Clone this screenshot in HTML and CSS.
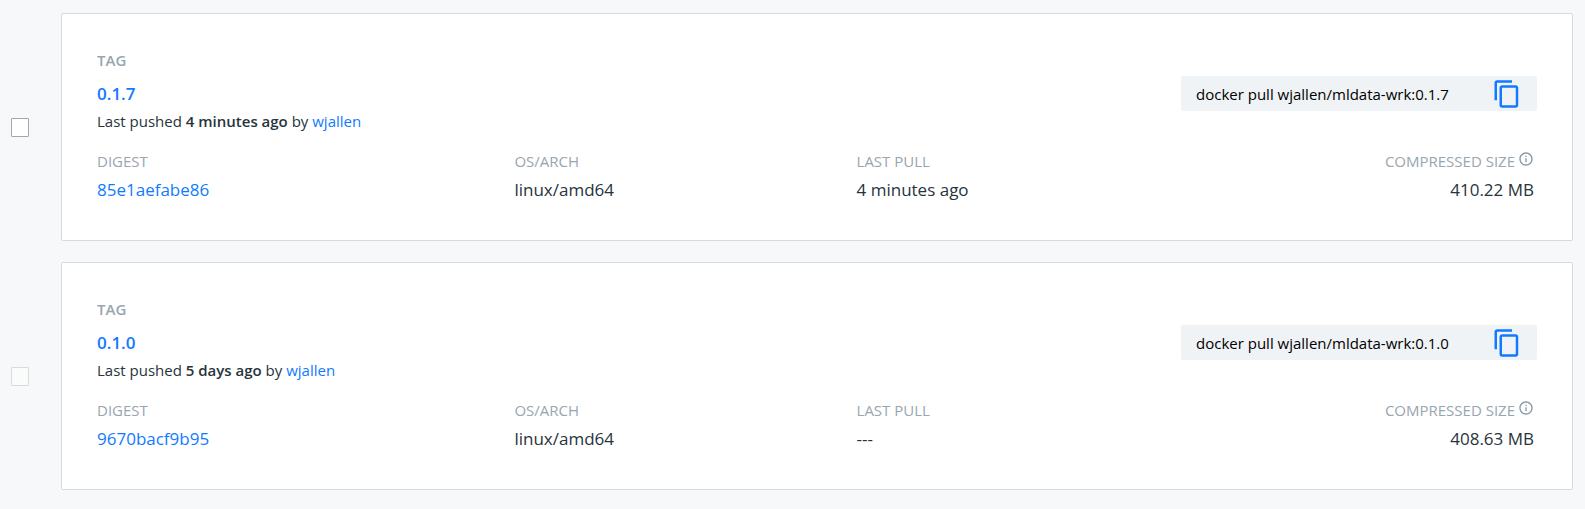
FILE: index.html
```
<!DOCTYPE html>
<html lang="en">
<head>
<meta charset="utf-8">
<title>Tags</title>
<link rel="stylesheet" href="styles.css">
</head>
<body>
<svg class="sprite" aria-hidden="true">
  <symbol id="copy" viewBox="0 0 24 24"><path d="M16 1H4c-1.100 0-2 .9-2 2v14h2V3h12V1zm3 4H8c-1.100 0-2 .9-2 2v14c0 1.100.9 2 2 2h11c1.100 0 2-.9 2-2V7c0-1.100-.9-2-2-2zm0 16H8V7h11v14z"/></symbol>
  <symbol id="info" viewBox="0 0 24 24"><path d="M11 7h2v2h-2zm0 4h2v6h-2zm1-9C6.480 2 2 6.480 2 12s4.480 10 10 10 10-4.480 10-10S17.520 2 12 2zm0 18c-4.410 0-8-3.590-8-8s3.590-8 8-8 8 3.590 8 8-3.590 8-8 8z"/></symbol>
</svg>
<main class="tags">
  <div class="row">
    <input class="check" type="checkbox" aria-label="Select tag 0.1.7">
    <article class="card">
      <div class="head">
        <div class="summary">
          <div class="label strong">TAG</div>
          <a class="name" href="#">0.1.7</a>
          <div class="pushed">Last pushed <b>4 minutes ago</b> by <a href="#">wjallen</a></div>
        </div>
        <div class="pull">
          <input class="command" type="text" readonly aria-label="Pull command" value="docker pull wjallen/mldata-wrk:0.1.7">
          <button class="copy" type="button" aria-label="Copy"><svg><use href="#copy"/></svg></button>
        </div>
      </div>
      <dl class="details">
        <div><dt class="label">DIGEST</dt><dd><a href="#">85e1aefabe86</a></dd></div>
        <div><dt class="label">OS/ARCH</dt><dd>linux/amd64</dd></div>
        <div><dt class="label">LAST PULL</dt><dd>4 minutes ago</dd></div>
        <div class="size"><dt class="label">COMPRESSED SIZE<svg class="info"><use href="#info"/></svg></dt><dd>410.22 MB</dd></div>
      </dl>
    </article>
  </div>
  <div class="row">
    <input class="check" type="checkbox" aria-label="Select tag 0.1.0" disabled>
    <article class="card">
      <div class="head">
        <div class="summary">
          <div class="label strong">TAG</div>
          <a class="name" href="#">0.1.0</a>
          <div class="pushed">Last pushed <b>5 days ago</b> by <a href="#">wjallen</a></div>
        </div>
        <div class="pull">
          <input class="command" type="text" readonly aria-label="Pull command" value="docker pull wjallen/mldata-wrk:0.1.0">
          <button class="copy" type="button" aria-label="Copy"><svg><use href="#copy"/></svg></button>
        </div>
      </div>
      <dl class="details">
        <div><dt class="label">DIGEST</dt><dd><a href="#">9670bacf9b95</a></dd></div>
        <div><dt class="label">OS/ARCH</dt><dd>linux/amd64</dd></div>
        <div><dt class="label">LAST PULL</dt><dd>---</dd></div>
        <div class="size"><dt class="label">COMPRESSED SIZE<svg class="info"><use href="#info"/></svg></dt><dd>408.63 MB</dd></div>
      </dl>
    </article>
  </div>
</main>
</body>
</html>
```
FILE: styles.css
```
* { box-sizing: border-box; }

body {
  margin: 0;
  background: #f7f8fa;
  color: #27343b;
  font: 15px/22px "Open Sans", sans-serif;
}

a { color: #127aff; text-decoration: none; }
b { font-weight: 600; }
.sprite { display: none; }

.tags {
  display: flex;
  flex-direction: column;
  gap: 21px;
  padding: 13px 12px 20px 11px;
}

.row { display: flex; align-items: center; gap: 32px; }

.check {
  appearance: none;
  flex: none;
  width: 18px;
  height: 19px;
  margin: 0;
  border: 1px solid #9aaab5;
  border-radius: 1px;
  background: #fff;
}
.check:disabled { border-color: #d8dbe0; background: #fafcfb; }

.card {
  flex: 1;
  padding: 35px 35px 38px;
  border: 1px solid #d5dade;
  border-radius: 2px;
  background: #fff;
}

.head { display: flex; justify-content: space-between; align-items: flex-start; }

.label { color: #98a6b0; }
.strong { font-weight: 600; }

.name {
  display: block;
  margin: 11px 0 4px;
  font-size: 17px;
  line-height: 24px;
  font-weight: 600;
}

.pull {
  display: flex;
  align-items: center;
  width: 356px;
  height: 35px;
  margin-top: 27px;
  padding: 0 15px;
  border-radius: 2px;
  background: #f0f3f6;
}

.command {
  flex: 1;
  min-width: 0;
  padding: 0;
  border: 0;
  background: none;
  color: #000;
  font: inherit;
  outline: 0;
}

.copy { display: flex; padding: 0; border: 0; background: none; }
.copy svg { width: 30px; height: 30px; fill: #127aff; }

.details {
  display: grid;
  grid-template-columns: 122fr 100fr 100fr 98fr;
  margin: 18px 0 0;
  padding-right: 3px;
}

dd { margin: 6px 0 0; font-size: 17px; line-height: 24px; }

.size { text-align: right; }
.size dt { display: flex; justify-content: flex-end; gap: 3px; }
.info { width: 16px; height: 16px; margin-top: 1px; fill: #8797a2; }
```
